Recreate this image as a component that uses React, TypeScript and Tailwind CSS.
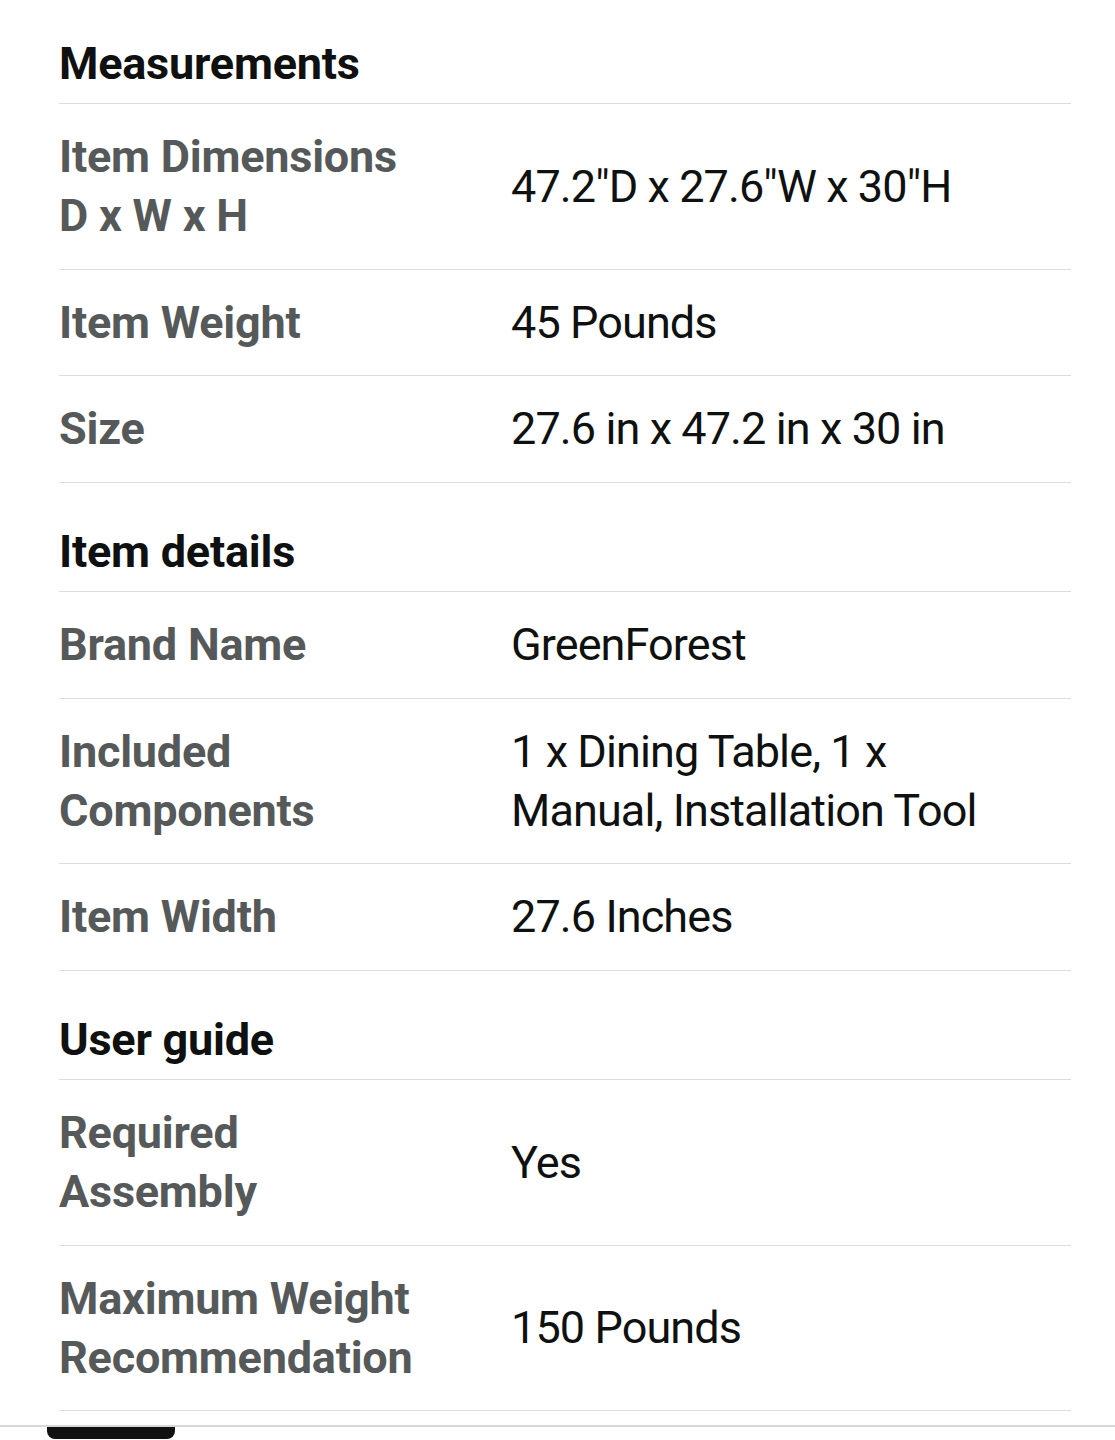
const sections: { title: string; rows: { label: string[]; value: string[] }[] }[] = [
  {
    title: 'Measurements',
    rows: [
      { label: ['Item Dimensions', 'D x W x H'], value: ['47.2"D x 27.6"W x 30"H'] },
      { label: ['Item Weight'], value: ['45 Pounds'] },
      { label: ['Size'], value: ['27.6 in x 47.2 in x 30 in'] },
    ],
  },
  {
    title: 'Item details',
    rows: [
      { label: ['Brand Name'], value: ['GreenForest'] },
      { label: ['Included', 'Components'], value: ['1 x Dining Table, 1 x', 'Manual, Installation Tool'] },
      { label: ['Item Width'], value: ['27.6 Inches'] },
    ],
  },
  {
    title: 'User guide',
    rows: [
      { label: ['Required', 'Assembly'], value: ['Yes'] },
      { label: ['Maximum Weight', 'Recommendation'], value: ['150 Pounds'] },
    ],
  },
];

export default function App() {
  return (
    <div className="h-[1440px] w-[1115px] overflow-hidden bg-white font-['Roboto',sans-serif]">
      <div className="pl-[59px] pr-[44px]">
        {sections.map((section, i) => (
          <div key={section.title}>
            <div
              className={`flex h-[109.5px] items-end border-b border-[#dddddd] pb-[10px] ${
                i === 0 ? '-mt-[5.5px]' : ''
              }`}
            >
              <h2 className="text-[45px] font-bold leading-[59px] tracking-[-0.005em] text-[#0f1111]">
                {section.title}
              </h2>
            </div>
            {section.rows.map((row) => (
              <div
                key={row.label[0]}
                className="flex items-center border-b border-[#dddddd] py-[23.25px] text-[45px] leading-[59px]"
              >
                <div className="w-[452px] shrink-0 font-bold tracking-[-0.005em] text-[#565959]">
                  {row.label.map((l) => (
                    <div key={l}>{l}</div>
                  ))}
                </div>
                <div className="tracking-[-0.02em] text-[#0f1111]">
                  {row.value.map((v) => (
                    <div key={v}>{v}</div>
                  ))}
                </div>
              </div>
            ))}
          </div>
        ))}
      </div>
      <div className="mt-[14px] border-t-2 border-[#d5d9d9]">
        <div className="ml-[47px] h-[12px] w-[128px] rounded-b-[8px] bg-[#111111]" />
      </div>
    </div>
  );
}
